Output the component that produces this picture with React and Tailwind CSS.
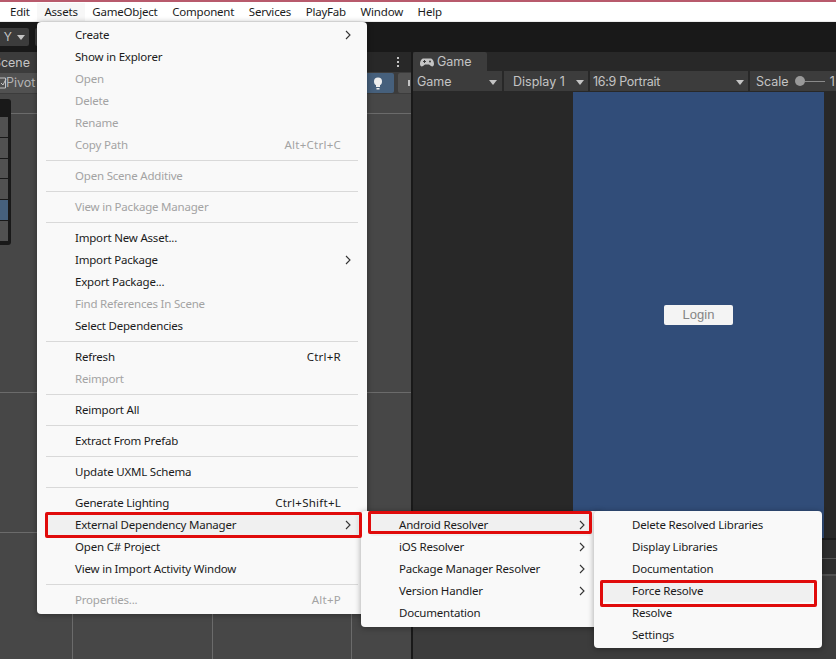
import React from "react";

const FONT = "[font-family:'Noto_Sans',sans-serif]";

function Chevron() {
  return (
    <svg width="6" height="10" viewBox="0 0 6 10" className="shrink-0">
      <path d="M1 1 L5 5 L1 9" fill="none" stroke="#333" strokeWidth="1.1" />
    </svg>
  );
}

function Row({ label, shortcut, arrow, disabled, active }) {
  return (
    <div className={`mx-[9px] h-[22px] pl-[29px] pr-[7px] flex items-center justify-between rounded-[3px] ${active ? "bg-[#f0f0f0]" : ""} ${disabled ? "text-[#a3a3a3]" : "text-[#1b1b1b]"}`}>
      <span className="whitespace-nowrap">{label}</span>
      {shortcut && <span className="mr-[10px] whitespace-nowrap tracking-[0.25px]">{shortcut}</span>}
      {arrow && <Chevron />}
    </div>
  );
}

function Sep() {
  return (
    <div className="h-[9px] flex items-center mx-[9px]">
      <div className="h-px w-full bg-[#d9d9d9]" />
    </div>
  );
}

function Menu({ className, children }) {
  return (
    <div className={`absolute bg-[#f9f9f9] rounded-[4px] shadow-[0_1px_6px_rgba(0,0,0,0.35)] text-[11.5px] tracking-[-0.2px] leading-none ${className}`}>
      {children}
    </div>
  );
}

function RedBox({ className }) {
  return <div className={`absolute border-[#e00b0b] rounded-[2px] ${className}`} />;
}

function Caret() {
  return (
    <svg width="8" height="5" viewBox="0 0 8 5" className="shrink-0">
      <path d="M0 0 H8 L4 5 Z" fill="#c4c4c4" />
    </svg>
  );
}

function Dropdown({ className, label, labelClass }) {
  return (
    <div className={`h-full flex items-center justify-between border-r-2 border-[#282828] ${className}`}>
      <span className={`text-[#c4c4c4] whitespace-nowrap ${labelClass || ""}`}>{label}</span>
      <Caret />
    </div>
  );
}

const MENUBAR = ["Edit", "Assets", "GameObject", "Component", "Services", "PlayFab", "Window", "Help"];

export default function App() {
  return (
    <div className={`relative w-[836px] h-[659px] overflow-hidden flex flex-col bg-[#191919] ${FONT}`}>
      <div className="h-[2px] bg-[#b85a6c] shrink-0" />
      <div className="h-[19px] bg-white flex items-center pl-[2.7px] pt-px text-[11.5px] tracking-[-0.2px] text-[#1b1b1b] shrink-0">
        {MENUBAR.map((m) => (
          <div key={m} className={`px-[7.3px] h-full flex items-center ${m === "Assets" ? "bg-[#f7f7f7]" : ""}`}>{m}</div>
        ))}
      </div>
      <div className="h-px bg-[#ececec] shrink-0" />

      <div className="h-[30px] bg-[#191919] shrink-0 flex items-center gap-[6px] font-['Inter',sans-serif]">
        <div className="w-[29px] h-[18px] bg-[#3c3c3c] rounded-r-[2px] flex items-center justify-end gap-[5px] pr-[4px] text-[12px] text-[#c4c4c4]">
          <span>Y</span>
          <Caret />
        </div>
        <div className="w-[40px] h-[18px] bg-[#3c3c3c] rounded-l-[2px]" />
      </div>

      <div className="flex-1 flex min-h-0 font-['Inter',sans-serif] text-[12.5px]">
        {/* Scene panel */}
        <div className="w-[411px] flex flex-col shrink-0">
          <div className="h-[20px] bg-[#282828] flex shrink-0">
            <div className="w-[37px] h-full bg-[#3c3c3c] flex items-center justify-end pr-[7px] pt-[2px] text-[#c4c4c4] overflow-hidden">
              <span className="whitespace-nowrap">Scene</span>
            </div>
            <div className="flex-1 flex justify-end items-center pr-[12px]">
              <div className="flex flex-col gap-[2px]">
                <div className="w-[2px] h-[2px] bg-[#c4c4c4]" />
                <div className="w-[2px] h-[2px] bg-[#c4c4c4]" />
                <div className="w-[2px] h-[2px] bg-[#c4c4c4]" />
              </div>
            </div>
          </div>
          <div className="h-[22px] bg-[#3c3c3c] flex items-center shrink-0">
            <div className="w-[37px] h-[20px] bg-[#515151] flex items-center text-[#b4b4b4] overflow-hidden">
              <svg width="7" height="12" viewBox="0 0 7 12" className="shrink-0">
                <path d="M-2 1 H5.5 V11 H-2" fill="none" stroke="#c4c4c4" />
                <path d="M1 6 L3 8 L6 2" fill="none" stroke="#c4c4c4" />
              </svg>
              <span className="ml-[-1px]">Pivot</span>
            </div>
            <div className="ml-auto flex items-center gap-[4px] h-[20px]">
              <div className="w-[27px] h-full bg-[#46607c] rounded-r-[2px] flex items-center justify-end pr-[11px]">
                <svg width="10" height="13" viewBox="0 0 10 13">
                  <circle cx="5" cy="4.5" r="4" fill="#eeeeee" />
                  <rect x="3" y="8" width="4" height="2" fill="#eeeeee" />
                  <rect x="3.5" y="11" width="3" height="1.5" fill="#eeeeee" />
                </svg>
              </div>
              <div className="w-[13px] h-full bg-[#515151] rounded-l-[2px] flex items-center justify-end pr-px">
                <div className="w-[2px] h-[6px] bg-[#c4c4c4]" />
              </div>
            </div>
          </div>
          <div className="relative flex-1 bg-[#474747] min-h-0">
            <svg width="411" height="565" className="block">
              <path d="M0 19.5 H411 M0 298.5 H411 M0 438.5 H411 M72.5 0 V565 M212.5 0 V565 M351.5 0 V565" stroke="#6b6b6b" strokeWidth="1" fill="none" />
            </svg>
            <div className="absolute left-0 top-[5px] w-[11px] h-[146px] bg-[#191919] rounded-r-[3px] flex flex-col gap-px pt-[18px] pb-[4px] pr-[3px]">
              {[0, 1, 2, 3, 4, 5].map((i) => (
                <div key={i} className={`flex-1 ${i === 4 ? "bg-[#46607c]" : "bg-[#515151]"}`} />
              ))}
            </div>
          </div>
        </div>

        <div className="w-[2px] bg-[#191919] shrink-0" />

        {/* Game panel */}
        <div className="flex-1 flex flex-col min-w-0">
          <div className="h-[19px] bg-[#282828] shrink-0">
            <div className="w-[74px] h-full bg-[#3c3c3c] rounded-t-[2px] flex items-center pl-[7px] pt-[2px] gap-[3px] text-[#c4c4c4]">
              <svg width="14" height="9" viewBox="0 0 14 9">
                <path d="M3.5 0.5 H10.5 C12.5 0.5 14 3 14 6 C14 8 12.5 9 11 8 L9 6.5 H5 L3 8 C1.5 9 0 8 0 6 C0 3 1.5 0.5 3.5 0.5 Z" fill="#c4c4c4" />
                <path d="M3 3.5 H6 M4.5 2 V5" stroke="#3c3c3c" strokeWidth="1" />
                <circle cx="10" cy="3.5" r="1" fill="#3c3c3c" />
              </svg>
              <span>Game</span>
            </div>
          </div>
          <div className="h-[21px] bg-[#3c3c3c] border-b border-[#282828] flex items-center shrink-0 leading-[22px]">
            <Dropdown className="w-[91px] pl-[4px] pr-[5px] pt-[2px]" label="Game" />
            <Dropdown className="w-[86px] pl-[9px] pr-[4px] pt-[2px]" label="Display 1" />
            <Dropdown className="w-[160px] pl-[3px] pr-[4px] pt-[2px]" label="16:9 Portrait" labelClass="tracking-[-0.3px]" />
            <span className="ml-[6px] pt-[2px] text-[#c4c4c4]">Scale</span>
            <div className="ml-[6px] w-[10px] h-[10px] rounded-full bg-[#999999] shrink-0" />
            <div className="w-[20px] h-px bg-[#8a8a8a] shrink-0" />
            <span className="ml-[5px] pt-[2px] text-[#c4c4c4]">1</span>
          </div>
          <div className="h-[446px] bg-[#282828] flex justify-start shrink-0 pl-[160px]">
            <div className="w-[251px] h-full bg-[#314d79] flex items-center justify-center">
              <div className="w-[69px] h-[20px] bg-[#f4f4f4] rounded-[2px] flex items-center justify-center text-[13px] text-[#858585] font-['Liberation_Sans',sans-serif]">
                Login
              </div>
            </div>
          </div>
          <div className="h-[2px] bg-[#1c1c1c] shrink-0" />
          <div className="h-[19px] bg-[#2e2e2e] border-b border-[#555555] shrink-0" />
          <div className="h-[17px] bg-[#2e2e2e] border-b-2 border-[#505050] shrink-0" />
          <div className="flex-1 bg-[#3c3c3c]" />
        </div>
      </div>

      {/* Assets menu */}
      <Menu className="left-[37px] top-[22px] w-[330px] pt-[2px] pb-[3px]">
        <Row label="Create" arrow />
        <Row label="Show in Explorer" />
        <Row label="Open" disabled />
        <Row label="Delete" disabled />
        <Row label="Rename" disabled />
        <Row label="Copy Path" shortcut="Alt+Ctrl+C" disabled />
        <Sep />
        <Row label="Open Scene Additive" disabled />
        <Sep />
        <Row label="View in Package Manager" disabled />
        <Sep />
        <Row label="Import New Asset..." />
        <Row label="Import Package" arrow />
        <Row label="Export Package..." />
        <Row label="Find References In Scene" disabled />
        <Row label="Select Dependencies" />
        <Sep />
        <Row label="Refresh" shortcut="Ctrl+R" />
        <Row label="Reimport" disabled />
        <Sep />
        <Row label="Reimport All" />
        <Sep />
        <Row label="Extract From Prefab" />
        <Sep />
        <Row label="Update UXML Schema" />
        <Sep />
        <Row label="Generate Lighting" shortcut="Ctrl+Shift+L" />
        <Row label="External Dependency Manager" arrow active />
        <Row label="Open C# Project" />
        <Row label="View in Import Activity Window" />
        <Sep />
        <Row label="Properties..." shortcut="Alt+P" disabled />
      </Menu>

      {/* First submenu */}
      <Menu className="left-[361px] top-[511px] w-[240px] pt-[3px] pb-[3px]">
        <Row label="Android Resolver" arrow active />
        <Row label="iOS Resolver" arrow />
        <Row label="Package Manager Resolver" arrow />
        <Row label="Version Handler" arrow />
        <Row label="Documentation" />
      </Menu>

      {/* Second submenu */}
      <Menu className="left-[594px] top-[511px] w-[228px] pt-[3px] pb-[2px]">
        <Row label="Delete Resolved Libraries" />
        <Row label="Display Libraries" />
        <Row label="Documentation" />
        <Row label="Force Resolve" active />
        <Row label="Resolve" />
        <Row label="Settings" />
      </Menu>

      {/* Annotation boxes */}
      <RedBox className="left-[45px] top-[512px] w-[317px] h-[26px] border-[3px]" />
      <RedBox className="left-[368px] top-[511px] w-[224px] h-[23px] border-[3px]" />
      <RedBox className="left-[600px] top-[580px] w-[217px] h-[27px] border-[3px]" />
    </div>
  );
}
